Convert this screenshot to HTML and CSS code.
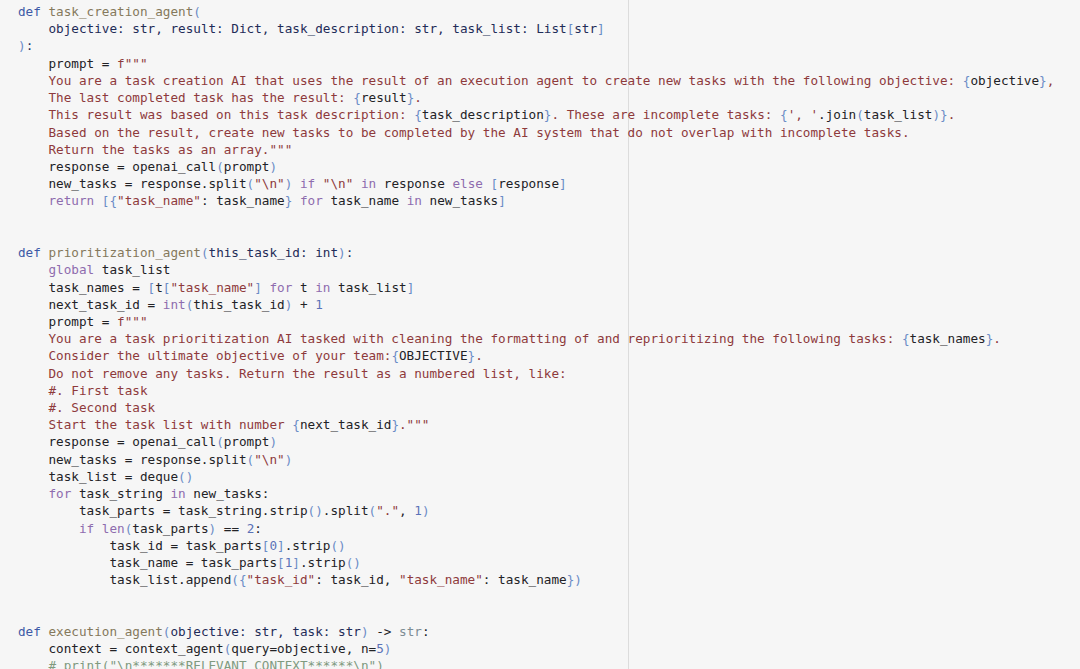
FILE: index.html
```html
<!DOCTYPE html>
<html>
<head>
<meta charset="utf-8">
<link rel="stylesheet" href="styles.css">
</head>
<body>
<div class="editor">
<pre class="code"><span class="k">def</span> <span class="fn">task_creation_agent</span><span class="b">(</span>
    <span class="p">objective: str, result: Dict, task_description: str, task_list: List</span><span class="b">[</span><span class="p">str</span><span class="b">]</span>
<span class="b">)</span><span class="p">:</span>
    prompt = <span class="s">f"""</span>
<span class="s">    You are a task creation AI that uses the result of an execution agent to create new tasks with the following objective: </span><span class="b">{</span>objective<span class="b">}</span><span class="s">,</span>
<span class="s">    The last completed task has the result: </span><span class="b">{</span>result<span class="b">}</span><span class="s">.</span>
<span class="s">    This result was based on this task description: </span><span class="b">{</span>task_description<span class="b">}</span><span class="s">. These are incomplete tasks: </span><span class="b">{</span><span class="s">', '</span>.join<span class="b">(</span>task_list<span class="b">)}</span><span class="s">.</span>
<span class="s">    Based on the result, create new tasks to be completed by the AI system that do not overlap with incomplete tasks.</span>
<span class="s">    Return the tasks as an array."""</span>
    response = openai_call<span class="b">(</span>prompt<span class="b">)</span>
    new_tasks = response.split<span class="b">(</span><span class="s">"\n"</span><span class="b">)</span> <span class="kw">if</span> <span class="s">"\n"</span> <span class="kw">in</span> response <span class="kw">else</span> <span class="b">[</span>response<span class="b">]</span>
    <span class="kw">return</span> <span class="b">[{</span><span class="s">"task_name"</span>: task_name<span class="b">}</span> <span class="kw">for</span> task_name <span class="kw">in</span> new_tasks<span class="b">]</span>


<span class="k">def</span> <span class="fn">prioritization_agent</span><span class="b">(</span><span class="p">this_task_id: int</span><span class="b">)</span><span class="p">:</span>
    <span class="kw">global</span> task_list
    task_names = <span class="b">[</span>t<span class="b">[</span><span class="s">"task_name"</span><span class="b">]</span> <span class="kw">for</span> t <span class="kw">in</span> task_list<span class="b">]</span>
    next_task_id = <span class="bi">int</span><span class="b">(</span>this_task_id<span class="b">)</span> + <span class="n">1</span>
    prompt = <span class="s">f"""</span>
<span class="s">    You are a task prioritization AI tasked with cleaning the formatting of and reprioritizing the following tasks: </span><span class="b">{</span>task_names<span class="b">}</span><span class="s">.</span>
<span class="s">    Consider the ultimate objective of your team:</span><span class="b">{</span>OBJECTIVE<span class="b">}</span><span class="s">.</span>
<span class="s">    Do not remove any tasks. Return the result as a numbered list, like:</span>
<span class="s">    #. First task</span>
<span class="s">    #. Second task</span>
<span class="s">    Start the task list with number </span><span class="b">{</span>next_task_id<span class="b">}</span><span class="s">."""</span>
    response = openai_call<span class="b">(</span>prompt<span class="b">)</span>
    new_tasks = response.split<span class="b">(</span><span class="s">"\n"</span><span class="b">)</span>
    task_list = deque<span class="b">()</span>
    <span class="kw">for</span> task_string <span class="kw">in</span> new_tasks:
        task_parts = task_string.strip<span class="b">()</span>.split<span class="b">(</span><span class="s">"."</span>, <span class="n">1</span><span class="b">)</span>
        <span class="kw">if</span> <span class="bi">len</span><span class="b">(</span>task_parts<span class="b">)</span> == <span class="n">2</span>:
            task_id = task_parts<span class="b">[</span><span class="n">0</span><span class="b">]</span>.strip<span class="b">()</span>
            task_name = task_parts<span class="b">[</span><span class="n">1</span><span class="b">]</span>.strip<span class="b">()</span>
            task_list.append<span class="b">({</span><span class="s">"task_id"</span>: task_id, <span class="s">"task_name"</span>: task_name<span class="b">})</span>


<span class="k">def</span> <span class="fn">execution_agent</span><span class="b">(</span><span class="p">objective: str, task: str</span><span class="b">)</span> -&gt; <span class="t">str</span>:
    context = context_agent<span class="b">(</span>query=objective, n=<span class="n">5</span><span class="b">)</span>
    <span class="c"># print("\n*******RELEVANT CONTEXT******\n")</span>
</pre>
</div>
</body>
</html>
```

FILE: styles.css
```css
html, body {
  margin: 0;
  padding: 0;
  overflow: hidden;
  height: 100%;
}

body {
  background: #f6f6f6;
}

.editor {
  height: 669px;
  background-color: #f6f6f6;
  background-image: linear-gradient(to right, transparent 628px, #dcdcdc 628px, #dcdcdc 629px, transparent 629px);
}

.code {
  margin: 0;
  padding: 3px 0 0 18px;
  font-family: "DejaVu Sans Mono", "Liberation Mono", monospace;
  font-size: 12.66px;
  line-height: 17.22px;
  color: #222226;
  white-space: pre;
}

.k { color: #3d5aa6; }
.fn { color: #85795c; }
.p { color: #1f2c58; }
.b { color: #6b8cc6; }
.s { color: #8e3a3c; }
.kw { color: #8e6cae; }
.bi { color: #8e6cae; }
.n { color: #5a72b8; }
.t { color: #7d8c94; }
.c { color: #7f9a7f; }
```
